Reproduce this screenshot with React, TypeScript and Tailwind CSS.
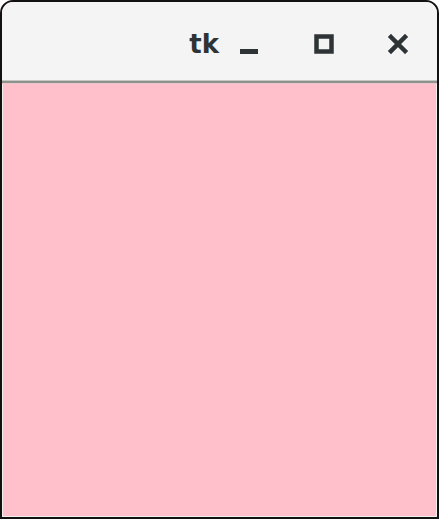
import React from "react";

export default function App() {
  return (
    <div className="w-[439px] h-[519px] bg-white">
      <div className="w-full h-full flex flex-col border-2 border-[#111111] rounded-t-[13px] overflow-hidden bg-[#ffc0cb]">
        <div className="h-[78px] flex items-center bg-[#f4f4f4] shrink-0" style={{ fontFamily: '"DejaVu Sans", "Open Sans", sans-serif' }}>
          <div className="flex-1" />
          <span className="text-[26px] font-bold text-[#2e3436] leading-none mr-[20px] mt-[6px]">tk</span>
          <svg width="20" height="20" viewBox="0 0 20 20" className="mr-[55px] mt-[10px]">
            <rect x="1" y="13" width="18" height="5" fill="#2e3436" />
          </svg>
          <svg width="20" height="20" viewBox="0 0 20 20" className="mr-[53px] mt-[5px]">
            <rect x="2.5" y="2.5" width="15" height="15" fill="none" stroke="#2e3436" strokeWidth="4.5" />
          </svg>
          <svg width="22" height="22" viewBox="0 0 22 22" className="mr-[28px] mt-[6px]">
            <path d="M4 4 L18 18 M18 4 L4 18" stroke="#2e3436" strokeWidth="4.5" strokeLinecap="square" />
          </svg>
        </div>
        <div className="h-[1px] bg-[#c6c7c4] shrink-0" />
        <div className="h-[2px] bg-[#8f918d] shrink-0" />
        <div className="h-[1px] bg-[#e8c8cd] shrink-0" />
        <div className="flex-1 bg-[#ffc0cb] border-x border-b border-[#f3eeee]" />
      </div>
    </div>
  );
}
